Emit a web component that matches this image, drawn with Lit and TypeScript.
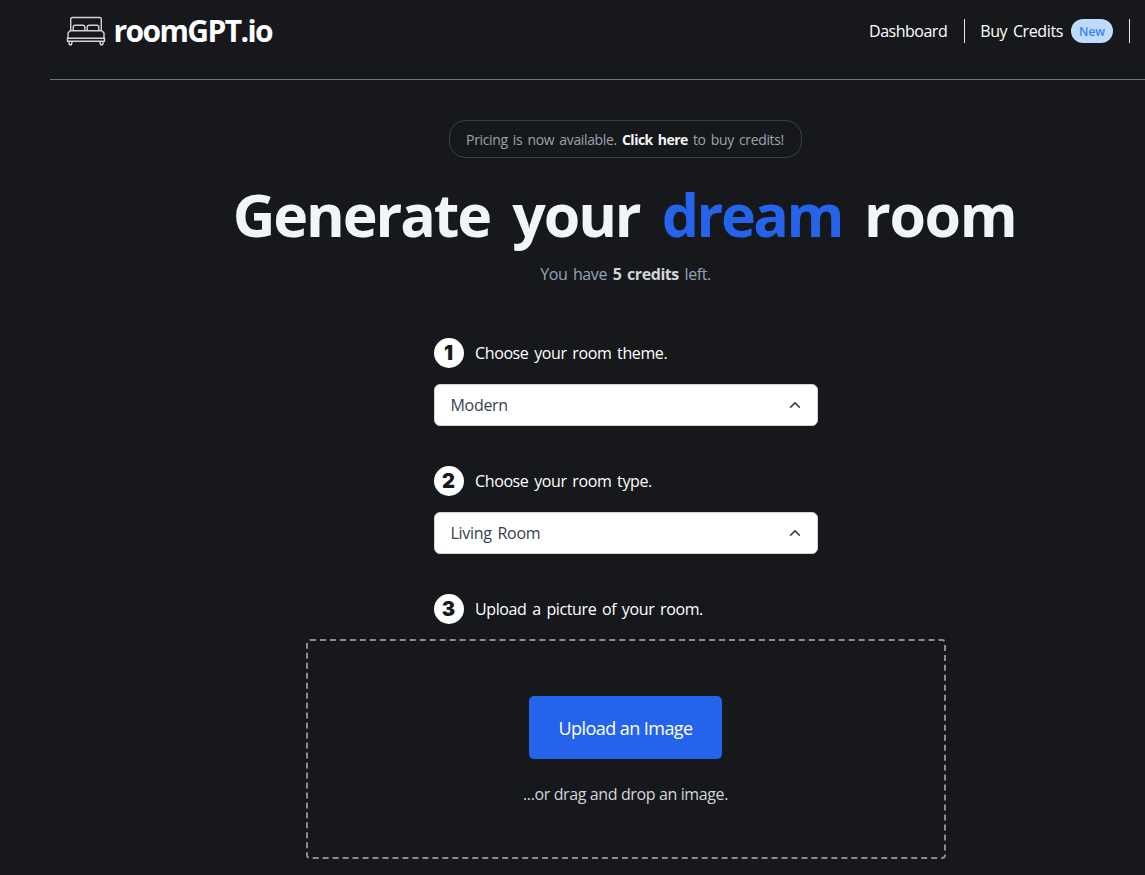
import { LitElement, html, css } from "lit";
import { customElement } from "lit/decorators.js";

@customElement("app-root")
export class AppRoot extends LitElement {
  static styles = css`
    :host {
      display: block;
      height: 875px;
      overflow: hidden;
      background: #17181c;
      color: #fff;
      font: 16px/24px "Open Sans", "Noto Sans", sans-serif;
      letter-spacing: -0.38px;
      word-spacing: 1.9px;
      white-space: nowrap;
    }
    * { box-sizing: border-box; }
    .page { width: 1151px; margin-left: 50px; }
    header {
      height: 80px;
      padding: 16px 16px 0;
      border-bottom: 1px solid #6b7280;
      display: flex;
      justify-content: space-between;
      align-items: flex-start;
    }
    .brand { display: flex; gap: 7.5px; }
    .brand svg { width: 40px; height: 30px; }
    .name { font-size: 30px; line-height: 30px; font-weight: 700; letter-spacing: -1.6px; }
    nav { display: flex; align-items: center; padding: 3px 0 0; margin-right: 55px; height: 27px; }
    .link { padding-right: 17px; border-right: 1px solid #e5e7eb; height: 24px; display: flex; gap: 8px; margin-right: 15px; }
    .link:first-child { letter-spacing: -0.5px; }
    .link:last-child { padding-right: 16px; margin-right: 0; }
    .badge { width: 42px; height: 24px; line-height: 25px; border-radius: 12px; background: #bfdbfe; color: #3b82f6; font-size: 12px; font-weight: 600; text-align: center; letter-spacing: -0.1px; }
    main { display: flex; flex-direction: column; align-items: center; padding-top: 40px; }
    .notice {
      width: 353px; height: 38px; border: 1px solid #374151; border-radius: 16px;
      color: #9ca3af; font-size: 14px; line-height: 38px; text-align: center; margin-right: 1px;
      letter-spacing: -0.35px; word-spacing: 1.8px;
    }
    .notice b { color: #f3f4f6; letter-spacing: -0.5px; }
    h1 { margin: 26px 2px 0 0; font-size: 59px; line-height: 60px; font-weight: 700; color: #f1f5f9; letter-spacing: -2.1px; word-spacing: 9px; }
    h1 span { color: #2563eb; letter-spacing: -2.5px; }
    h1 .last { color: inherit; letter-spacing: -1.4px; }
    .credits { margin-top: 18px; color: #94a3b8; letter-spacing: -0.42px; }
    .credits b { color: #d1d5db; }
    .form { width: 384px; margin-top: 52px; display: flex; flex-direction: column; }
    .step { display: flex; align-items: center; gap: 11.5px; height: 30px; }
    .num { width: 30px; height: 30px; border-radius: 50%; background: #fff; color: #17181c; font: 900 20px/31px Inter, sans-serif; letter-spacing: 0; text-align: center; }
    .select {
      margin: 16px 0 40px; height: 42px; background: #fff; color: #374151; border: 1px solid #d1d5db;
      border-radius: 6px; display: flex; justify-content: space-between; align-items: center; padding: 0 16px;
      letter-spacing: -0.3px; word-spacing: 2px;
    }
    .select svg { width: 12px; height: 8px; }
    .drop {
      width: 640px; height: 220px; margin-top: 15px; border: 2px dashed #8b8c8e; border-radius: 4px;
      display: flex; flex-direction: column; align-items: center; padding-top: 55px;
      word-spacing: 0;
    }
    button { width: 193px; height: 63px; background: #2563eb; color: #fff; border: 0; border-radius: 5px; font: 18px/24px "Open Sans", sans-serif; letter-spacing: -0.55px; padding: 0; }
    .hint { margin-top: 23px; color: #d1d5db; letter-spacing: -0.38px; }
  `;

  step(n: number, label: string) {
    return html`<div class="step"><span class="num">${n}</span><span>${label}</span></div>`;
  }

  select(value: string) {
    return html`<div class="select"><span>${value}</span>
      <svg viewBox="0 0 12 8"><path d="M1.2 6.6 6 1.9l4.8 4.7" fill="none" stroke="#374151" stroke-width="1.5"/></svg>
    </div>`;
  }

  render() {
    return html`<div class="page">
      <header>
        <div class="brand">
          <svg viewBox="0 0 40 30" fill="none" stroke="#d4d4d5" stroke-width="1.4">
            <path d="M4.7 14V3.2q0-1.7 1.7-1.7h27.2q1.7 0 1.7 1.7V14"/>
            <path d="M7.2 14v-2.8q0-2 2-2h7.6q2 0 2 2V14M21.2 14v-2.8q0-2 2-2h7.6q2 0 2 2V14M4 14.7h32M4 14.7 2 17v5M36 14.7l2 2.3v5"/>
            <path d="M1.5 22.2h37v3h-37zM3 25.2v2.5l.7 1h1.6l1-3.5M37 25.2v2.5l-.7 1h-1.6l-1-3.5"/>
          </svg>
          <span class="name">roomGPT.io</span>
        </div>
        <nav>
          <div class="link"><span>Dashboard</span></div>
          <div class="link"><span>Buy Credits</span><span class="badge">New</span></div>
        </nav>
      </header>
      <main>
        <div class="notice">Pricing is now available. <b>Click here</b> to buy credits!</div>
        <h1>Generate your <span>dream</span> <span class="last">room</span></h1>
        <div class="credits">You have <b>5 credits</b> left.</div>
        <div class="form">
          ${this.step(1, "Choose your room theme.")}
          ${this.select("Modern")}
          ${this.step(2, "Choose your room type.")}
          ${this.select("Living Room")}
          ${this.step(3, "Upload a picture of your room.")}
        </div>
        <div class="drop">
          <button>Upload an Image</button>
          <div class="hint">...or drag and drop an image.</div>
        </div>
      </main>
    </div>`;
  }
}
